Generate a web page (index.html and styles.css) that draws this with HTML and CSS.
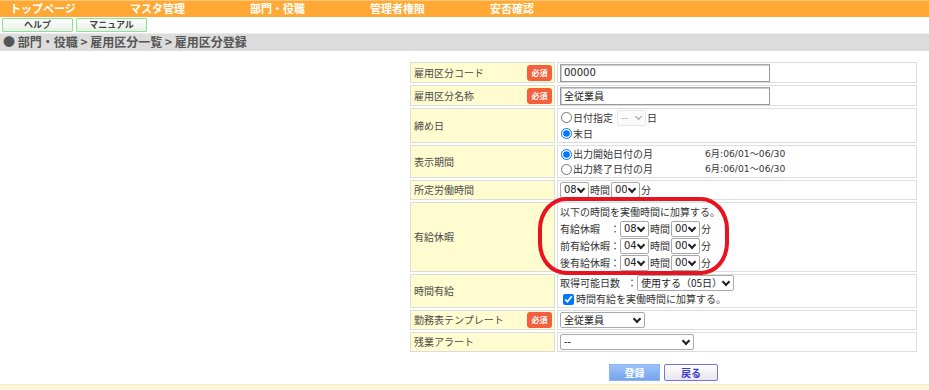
FILE: index.html
```html
<!DOCTYPE html>
<html lang="ja">
<head>
<meta charset="utf-8">
<title>雇用区分登録</title>
<link rel="stylesheet" href="styles.css">
</head>
<body>
<nav class="gnav">
  <span class="gnav-item">トップページ</span>
  <span class="gnav-item">マスタ管理</span>
  <span class="gnav-item">部門・役職</span>
  <span class="gnav-item">管理者権限</span>
  <span class="gnav-item">安否確認</span>
</nav>
<div class="subbar">
  <button class="sub-btn">ヘルプ</button>
  <button class="sub-btn">マニュアル</button>
</div>
<div class="crumb">● 部門・役職 &gt; 雇用区分一覧 &gt; 雇用区分登録</div>

<main class="main">
  <div class="form-wrap">
    <table class="form">
      <tr class="h19">
        <th><div class="lab"><span>雇用区分コード</span><span class="req">必須</span></div></th>
        <td><div class="cell"><input class="txt" type="text" value="00000"></div></td>
      </tr>
      <tr class="h19">
        <th><div class="lab"><span>雇用区分名称</span><span class="req">必須</span></div></th>
        <td><div class="cell"><input class="txt" type="text" value="全従業員"></div></td>
      </tr>
      <tr class="h33">
        <th><div class="lab"><span>締め日</span></div></th>
        <td><div class="cell">
          <div class="line l16"><label class="opt"><input type="radio" name="shime">日付指定</label><span class="sw sw-dis gap-l"><select class="sel sel-s" disabled><option>--</option></select></span><span>日</span></div>
          <div class="line l16"><label class="opt"><input type="radio" name="shime" checked>末日</label></div>
        </div></td>
      </tr>
      <tr class="h31">
        <th><div class="lab"><span>表示期間</span></div></th>
        <td><div class="cell">
          <div class="line l15"><label class="opt opt-w"><input type="radio" name="disp" checked>出力開始日付の月</label><span class="num">6月:06/01～06/30</span></div>
          <div class="line l15"><label class="opt opt-w"><input type="radio" name="disp">出力終了日付の月</label><span class="num">6月:06/01～06/30</span></div>
        </div></td>
      </tr>
      <tr class="h18">
        <th><div class="lab"><span>所定労働時間</span></div></th>
        <td><div class="cell">
          <div class="line"><span class="sw"><select class="sel sel-s"><option>08</option></select></span><span>時間</span><span class="sw"><select class="sel sel-s"><option>00</option></select></span><span>分</span></div>
        </div></td>
      </tr>
      <tr class="h68">
        <th><div class="lab"><span>有給休暇</span></div></th>
        <td><div class="cell">
          <div class="line l17">以下の時間を実働時間に加算する。</div>
          <div class="line l17"><span class="k">有給休暇</span><span class="colon">：</span><span class="sw"><select class="sel sel-s"><option>08</option></select></span><span>時間</span><span class="sw"><select class="sel sel-s"><option>00</option></select></span><span>分</span></div>
          <div class="line l17"><span class="k">前有給休暇</span><span class="colon">：</span><span class="sw"><select class="sel sel-s"><option>04</option></select></span><span>時間</span><span class="sw"><select class="sel sel-s"><option>00</option></select></span><span>分</span></div>
          <div class="line l17"><span class="k">後有給休暇</span><span class="colon">：</span><span class="sw"><select class="sel sel-s"><option>04</option></select></span><span>時間</span><span class="sw"><select class="sel sel-s"><option>00</option></select></span><span>分</span></div>
        </div></td>
      </tr>
      <tr class="h32">
        <th><div class="lab"><span>時間有給</span></div></th>
        <td><div class="cell">
          <div class="line l16"><span class="k2">取得可能日数</span><span class="colon">：</span><span class="sw"><select class="sel sel-m"><option>使用する（05日）</option></select></span></div>
          <div class="line l16"><label class="opt"><input type="checkbox" checked>時間有給を実働時間に加算する。</label></div>
        </div></td>
      </tr>
      <tr class="h18">
        <th><div class="lab"><span>勤務表テンプレート</span><span class="req">必須</span></div></th>
        <td><div class="cell"><div class="line"><span class="sw"><select class="sel sel-t"><option>全従業員</option></select></span></div></div></td>
      </tr>
      <tr class="h18">
        <th><div class="lab"><span>残業アラート</span></div></th>
        <td><div class="cell"><div class="line"><span class="sw"><select class="sel sel-l"><option>--</option></select></span></div></div></td>
      </tr>
    </table>
    <div class="actions">
      <button class="btn btn-primary">登録</button>
      <button class="btn btn-back">戻る</button>
    </div>
  </div>
</main>
<div class="footer-strip"></div>
<div class="annot"></div>
</body>
</html>
```
FILE: styles.css
```css
* { box-sizing: border-box; }
html, body { margin: 0; padding: 0; }
body {
  width: 929px;
  height: 390px;
  overflow: hidden;
  position: relative;
  font-family: "Noto Sans CJK JP", "Noto Sans", sans-serif;
  font-size: 10px;
  color: #333;
  background: #fff;
}
.gnav {
  display: flex;
  height: 17px;
  background: #ffa833;
  border-top: 1px solid #ffc57a;
}
.gnav-item {
  width: 120px;
  padding-left: 10px;
  color: #fff;
  font-weight: bold;
  font-size: 11px;
  line-height: 15px;
}
.subbar {
  display: flex;
  gap: 3px;
  padding: 1px 2px 0;
  height: 16px;
}
.sub-btn {
  width: 71px;
  height: 14px;
  margin: 0;
  padding: 0;
  border: 1px solid #8fe08f;
  border-radius: 1px;
  background: linear-gradient(#ffffff, #e6eee6);
  font-family: inherit;
  font-size: 9px;
  font-weight: bold;
  color: #444;
  line-height: 12px;
}
.crumb {
  height: 18px;
  background: #dcdcdc;
  border-top: 1px solid #ececec;
  padding-left: 3px;
  font-size: 12px;
  font-weight: bold;
  color: #555;
  line-height: 16px;
}
.main {
  display: flex;
  justify-content: flex-end;
  padding: 9px 10px 0 0;
}
.form-wrap {
  display: flex;
  flex-direction: column;
  align-items: center;
}
.form {
  width: 511px;
  border-collapse: separate;
  border-spacing: 2px;
}
.form th, .form td {
  border: 1px solid #dcdcdc;
  padding: 0;
  vertical-align: middle;
}
.form th {
  width: 145px;
  background: #fffcd0;
  text-align: left;
  font-weight: normal;
  color: #4a4a4a;
}
.lab {
  display: flex;
  justify-content: space-between;
  align-items: center;
  padding: 0 2px 0 3px;
  line-height: 14px;
}
.cell {
  display: flex;
  flex-direction: column;
  justify-content: center;
  padding: 0 2px;
}
.h19 .lab, .h19 .cell { height: 19px; }
.h18 .lab, .h18 .cell { height: 18px; }
.h33 .lab, .h33 .cell { height: 33px; }
.h31 .lab, .h31 .cell { height: 31px; }
.h32 .lab, .h32 .cell { height: 32px; }
.h68 .lab, .h68 .cell { height: 68px; }
.req {
  background: #f5603c;
  color: #fff;
  font-size: 8px;
  font-weight: bold;
  border-radius: 3px;
  width: 25px;
  height: 16px;
  line-height: 16px;
  text-align: center;
}
.txt {
  width: 210px;
  height: 18px;
  margin: 0;
  padding: 0 3px;
  border: 1px solid #999;
  border-top-color: #aaa;
  box-shadow: inset 1px 1px 0 #ccc;
  font-family: "DejaVu Sans", "Noto Sans CJK JP", sans-serif;
  font-size: 10px;
  color: #222;
  display: block;
}
.line {
  display: flex;
  align-items: center;
  white-space: nowrap;
  line-height: 14px;
}
.l17 { height: 17px; }
.l16 { height: 16px; }
.l15 { height: 15px; }
.opt {
  display: inline-flex;
  align-items: center;
}
.opt-w { width: 145px; }
.opt input[type=radio] {
  width: 11px;
  height: 11px;
  margin: 0 1px 0 1px;
}
.opt input[type=checkbox] {
  width: 11px;
  height: 11px;
  margin: 0 2px 0 3px;
}
.num {
  font-family: "DejaVu Sans", "Noto Sans CJK JP", sans-serif;
  font-size: 9.2px;
  color: #333;
}
.sw {
  position: relative;
  display: inline-flex;
  margin: 0 1px;
}
.sw:first-child { margin-left: 0; }
.gap-l { margin-left: 4px; }
.sw::after {
  content: "";
  position: absolute;
  right: 5px;
  top: 4px;
  width: 4px;
  height: 4px;
  border-right: 2px solid #222;
  border-bottom: 2px solid #222;
  transform: rotate(45deg);
  pointer-events: none;
}
.sw-dis::after {
  border-color: #9a9a9a;
  border-width: 0 1px 1px 0;
}
.sel {
  -webkit-appearance: none;
  appearance: none;
  height: 16px;
  margin: 0;
  padding: 0 12px 0 3px;
  font-family: "DejaVu Sans", "Noto Sans CJK JP", sans-serif;
  font-size: 10px;
  line-height: 14px;
  color: #222;
  border: 1px solid #a9a9a9;
  border-radius: 2px;
  background: #fff;
  outline: none;
}
.sel:disabled {
  color: #999;
  border-color: #ddd;
  background: #fafafa;
}
.sel-s { width: 29px; }
.sel-m { width: 97px; font-family: "Noto Sans CJK JP", sans-serif; }
.sel-t { width: 85px; font-family: "Noto Sans CJK JP", sans-serif; }
.sel-l { width: 134px; }
.k { width: 50px; }
.k2 { width: 67px; }
.colon { width: 9px; }
.actions {
  display: flex;
  gap: 4px;
  justify-content: center;
  margin-top: 10px;
}
.btn {
  width: 51px;
  height: 17px;
  margin: 0;
  padding: 0;
  font-family: inherit;
  font-size: 10px;
  font-weight: bold;
  line-height: 15px;
}
.btn-primary {
  border: 1px solid #8fb4f0;
  background: linear-gradient(#9cc2f7, #74a3ee);
  color: #fff;
}
.btn-back {
  width: 54px;
  border: 1px solid #7b6ee6;
  border-radius: 2px;
  background: linear-gradient(#ffffff, #e6e6ec);
  color: #3a3ad0;
}
.footer-strip {
  position: absolute;
  left: 0;
  right: 0;
  top: 384px;
  height: 6px;
  background: #fff6de;
  border-top: 1px solid #ffe9b8;
}
.annot {
  position: absolute;
  left: 538px;
  top: 197px;
  width: 191px;
  height: 78px;
  border: 4px solid #e8131f;
  border-radius: 28px / 32px;
  pointer-events: none;
}
```
